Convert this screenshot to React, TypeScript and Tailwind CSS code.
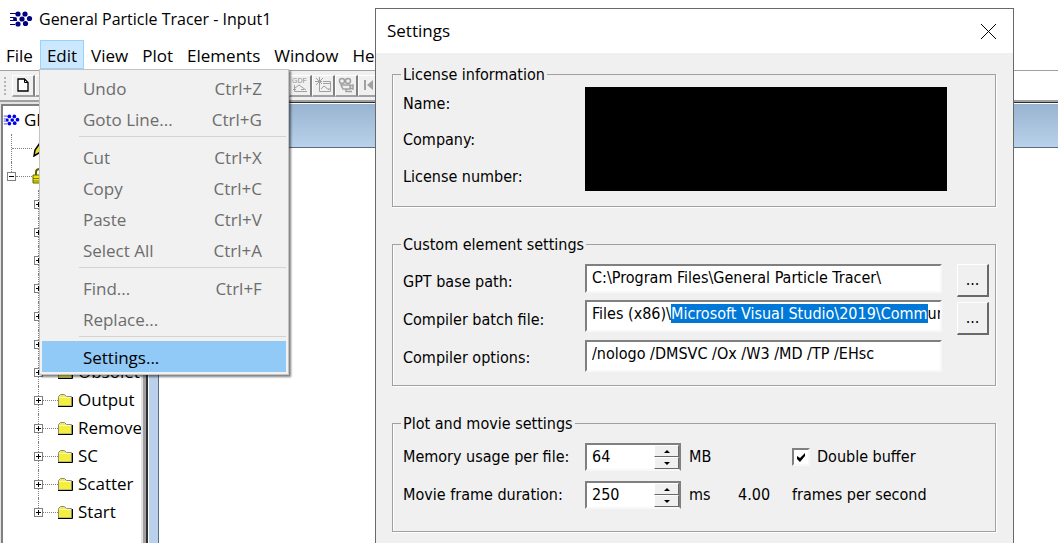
import { useEffect, useRef } from "react";

const menus = ["File", "Edit", "View", "Plot", "Elements", "Window", "Help"];

const editMenu = [
  [
    { name: "Undo", keys: "Ctrl+Z" },
    { name: "Goto Line...", keys: "Ctrl+G" },
  ],
  [
    { name: "Cut", keys: "Ctrl+X" },
    { name: "Copy", keys: "Ctrl+C" },
    { name: "Paste", keys: "Ctrl+V" },
    { name: "Select All", keys: "Ctrl+A" },
  ],
  [
    { name: "Find...", keys: "Ctrl+F" },
    { name: "Replace...", keys: "" },
  ],
  [{ name: "Settings...", keys: "" }],
];

// the first six folders are covered by the open menu
const folders = ["", "", "", "", "", "", "Obsolete", "Output", "Remove", "SC", "Scatter", "Start"];

function Logo({ className }: { className: string }) {
  return (
    <svg viewBox="0 0 24 16" className={className} fill="currentColor">
      <g stroke="currentColor" strokeWidth="1">
        <path d="M1 2.500h7M1 6.500h4M1 9.500h7M1 13.500h5" />
      </g>
      <circle cx="9" cy="3" r="2.600" />
      <circle cx="16" cy="3" r="2.600" />
      <circle cx="6" cy="8" r="2" />
      <circle cx="13" cy="8" r="2.600" />
      <circle cx="20.500" cy="7.500" r="2.600" />
      <circle cx="9" cy="13" r="2.600" />
      <circle cx="16.500" cy="12.500" r="2.600" />
    </svg>
  );
}

function Folder() {
  return (
    <svg viewBox="0 0 15 13" className="h-[13px] w-[15px] shrink-0">
      <path d="M.5 12V2.500l2-2h4l2 2h5V12z" fill="#f4ee3c" stroke="#8a8a8a" />
      <path d="M1.500 3.500h11" stroke="#fffbd0" />
      <path d="M0 12.500h14.500V3" fill="none" stroke="#000" />
    </svg>
  );
}

function Expander({ open }: { open?: boolean }) {
  return (
    <svg viewBox="0 0 9 9" className="z-10 size-[9px] shrink-0">
      <rect x=".5" y=".5" width="8" height="8" fill="#fff" stroke="#808080" />
      <path d={open ? "M2 4.500h5" : "M2 4.500h5M4.500 2v5"} stroke="#000" />
    </svg>
  );
}

function ToolButton({ label, children }: { label: string; children?: React.ReactNode }) {
  return (
    <button
      aria-label={label}
      className="flex h-[22px] w-[23px] shrink-0 items-center justify-center border-t border-r-2 border-b-2 border-l border-t-white border-r-[#808080] border-b-[#a0a0a0] border-l-white bg-[#f0f0f0]"
    >
      {children}
    </button>
  );
}

function Toolbar() {
  return (
    <div className="mt-px flex h-[30px] shrink-0 items-center border-t border-[#a0a0a0] bg-white">
      <div className="flex h-full w-2/3 items-center bg-[#f0f0f0]">
        <div className="mr-[6px] ml-1 h-[18px] w-[2px] border-l-2 border-dotted border-[#b4b4b4]" />
        <ToolButton label="New">
          <svg viewBox="0 0 12 14" className="h-[14px] w-3">
            <path d="M1 1h6.500l3.500 3.500V13H1z" fill="#fff" stroke="#000" strokeWidth="1.300" />
            <path d="M7.500 1v3.500H11" fill="none" stroke="#000" />
          </svg>
        </ToolButton>
        <ToolButton label="Open" />
        <div className="w-[231px] shrink-0" />
        <ToolButton label="GDF plot">
          <svg viewBox="0 0 16 16" className="size-4" fill="none" stroke="#a0a0a0">
            <text x="0" y="6" fontSize="7" fontFamily="Liberation Sans" fill="#909090" stroke="none">
              GDF
            </text>
            <path d="M2.500 8v6.500H15M3 11l4-3 7 5M1 12.500h3M9 12.500h3" />
          </svg>
        </ToolButton>
        <ToolButton label="New plot">
          <svg viewBox="0 0 16 16" className="size-4" fill="none" stroke="#a0a0a0">
            <path d="M0 4.500h7M4.500 0v8M1 1l6 6M8 1L1 8" />
            <path d="M4.500 8v6.500h11v-10H8M8 6.500h8M6 12l3-3 5 4v-2" />
          </svg>
        </ToolButton>
        <ToolButton label="Movie">
          <svg viewBox="0 0 16 16" className="size-4" fill="none" stroke="#a0a0a0" strokeWidth="1.500">
            <circle cx="4" cy="4" r="2.500" />
            <circle cx="10" cy="4" r="2.500" />
            <path d="M3 8h9v4H5zM12 9l3-1v4l-3-1M8 12v2.500h6" />
          </svg>
        </ToolButton>
        <ToolButton label="First frame">
          <svg viewBox="0 0 16 16" className="size-4" fill="#a0a0a0">
            <path d="M3 3h2v10H3zM12 3v10L6 8z" />
          </svg>
        </ToolButton>
      </div>
    </div>
  );
}

function EditMenu() {
  return (
    <div
      role="menu"
      className="absolute top-full -left-px z-20 w-[250px] border border-[#c4c4c4] bg-[#f1f1f1] p-[2px] shadow-[2px_2px_2px_#00000080]"
    >
      {editMenu.map((group, i) => (
        <div key={i}>
          {i > 0 && <div className="mt-[2px] mb-1 ml-[37px] h-px bg-[#d4d4d4]" />}
          {group.map((item) => (
            <button
              key={item.name}
              role="menuitem"
              className={
                item.name === "Settings..."
                  ? "flex h-[31px] w-full items-center justify-between bg-[#91c9f7] pt-[2px] pr-6 pl-[41px] text-black"
                  : "flex h-[31px] w-full items-center justify-between pt-[2px] pr-6 pl-[41px] text-[#6d6d6d]"
              }
            >
              <span>{item.name}</span>
              <span>{item.keys}</span>
            </button>
          ))}
        </div>
      ))}
    </div>
  );
}

function Tree() {
  return (
    <div className="mt-[2px] ml-px w-[142px] shrink-0 overflow-hidden border-t-2 border-r-2 border-l-2 border-t-[#808080] border-r-[#e3e3e3] border-l-[#808080] bg-white text-[17px]">
      <div className="flex h-7 items-center whitespace-nowrap">
        <Logo className="mr-1 h-[14px] w-[17px] shrink-0 text-[#0000f0]" />
        GPT
      </div>
      <div className="ml-2 border-l border-dotted border-[#808080]">
        <div className="flex h-7 items-center">
          <div className="w-5 border-t border-dotted border-[#808080]" />
          <svg viewBox="0 0 16 18" className="h-[18px] w-4">
            <path d="M2 17l1-6 7-10 4 3-7 10z" fill="#e8e020" stroke="#000" strokeWidth="1.500" />
            <path d="M9 2l4 3" stroke="#c00000" strokeWidth="3" />
          </svg>
        </div>
      </div>
      <div className="relative flex h-7 items-center pl-1">
        <div className="absolute top-0 left-2 h-[10px] border-l border-dotted border-[#808080]" />
        <Expander open />
        <div className="w-4 border-t border-dotted border-[#808080]" />
        <svg viewBox="0 0 16 16" className="size-4">
          <path d="M4 8V4q0-3 4-3t4 3v4" fill="none" stroke="#606000" strokeWidth="2" />
          <path d="M1 7h14v8H1z" fill="#f0e800" stroke="#606000" />
          <path d="M1 10.500h14M1 13h14" stroke="#808000" />
        </svg>
      </div>
      <ul>
        {folders.map((name, i) => (
          <li key={i} className="group flex h-7 items-center whitespace-nowrap">
            <div className="ml-[35px] h-full w-0 self-start border-l border-dotted border-[#808080] group-last:h-1/2" />
            <div className="-ml-[5px]">
              <Expander />
            </div>
            <div className="w-[15px] shrink-0 border-t border-dotted border-[#808080]" />
            <Folder />
            <span className="ml-[5px]">{name}</span>
          </li>
        ))}
      </ul>
    </div>
  );
}

const field =
  "border-2 border-t-[#808080] border-r-[#f8f8f8] border-b-[#f8f8f8] border-l-[#808080] bg-white pl-[5px] outline-none";

function BrowseButton({ label }: { label: string }) {
  return (
    <button
      aria-label={label}
      className="ml-[15px] h-[33px] w-8 border-t border-r-2 border-b-2 border-l border-t-white border-r-[#696969] border-b-[#696969] border-l-white bg-[#f0f0f0]"
    >
      ...
    </button>
  );
}

function Spinner({ id, value }: { id: string; value: string }) {
  const step =
    "flex h-3 w-[25px] items-center justify-center border border-t-white border-r-[#696969] border-b-[#696969] border-l-white bg-[#f0f0f0]";
  return (
    <div className="flex h-7 w-24 border-2 border-t-[#808080] border-r-[#808080] border-b-[#f8f8f8] border-l-[#808080] bg-white">
      <input id={id} defaultValue={value} className="w-0 grow pl-[5px] outline-none" />
      <div>
        <button aria-label="Increase" className={step}>
          <svg viewBox="0 0 6 3" className="h-[3px] w-[6px]">
            <path d="M3 0l3 3H0z" />
          </svg>
        </button>
        <button aria-label="Decrease" className={step}>
          <svg viewBox="0 0 6 3" className="h-[3px] w-[6px]">
            <path d="M3 3l3-3H0z" />
          </svg>
        </button>
      </div>
    </div>
  );
}

const group = "border border-[#a0a0a0] pl-[10px] shadow-[inset_1px_0_#fff,1px_1px_#fff]";
const legend = "-ml-[2px] px-[2px] pt-[2px] leading-[18px]";

function SettingsDialog() {
  const batch = useRef<HTMLInputElement>(null);

  useEffect(() => {
    const input = batch.current;
    if (!input) return;
    input.focus();
    input.setSelectionRange(12, 45);
    input.scrollLeft = 0;
  }, []);

  return (
    <div
      role="dialog"
      aria-label="Settings"
      className="absolute top-2 bottom-0 left-[375px] z-10 w-[639px] overflow-hidden border border-b-0 border-[#696969] bg-[#f0f0f0] font-['DejaVu_Sans_Condensed','DejaVu_Sans',sans-serif] text-base whitespace-nowrap"
    >
      <div className="flex h-11 items-center justify-between bg-white pr-[17px] pl-[11px] font-['Open_Sans',sans-serif] text-[17px]">
        <span>Settings</span>
        <button aria-label="Close">
          <svg viewBox="0 0 15 15" className="size-[15px]">
            <path d="M0 0l15 15M15 0L0 15" stroke="#000" />
          </svg>
        </button>
      </div>

      <form className="flex flex-col gap-[27px] pt-[11px] pr-[17px] pl-4">
        <fieldset className={group}>
          <legend className={legend}>License information</legend>
          <div className="flex pt-[3px] pb-[11px]">
            <div className="w-[182px]">
              <div className="flex h-[34px] items-center">Name:</div>
              <div className="flex h-[38px] items-center">Company:</div>
              <div className="flex h-9 items-center">License number:</div>
            </div>
            <div className="h-[104px] w-[362px] bg-black" />
          </div>
        </fieldset>

        <fieldset className={group}>
          <legend className={legend}>Custom element settings</legend>
          <div className="pt-[10px] pb-[9px]">
            <div className="flex h-9 items-start">
              <label htmlFor="base" className="w-[182px] self-center">
                GPT base path:
              </label>
              <input
                id="base"
                defaultValue="C:\Program Files\General Particle Tracer\"
                className={`${field} h-[29px] w-[357px] pb-[2px]`}
              />
              <BrowseButton label="Browse base path" />
            </div>
            <div className="flex h-10 items-start">
              <label htmlFor="batch" className="w-[182px] self-center">
                Compiler batch file:
              </label>
              <input
                id="batch"
                ref={batch}
                defaultValue="Files (x86)\Microsoft Visual Studio\2019\Community"
                className={`${field} h-8 w-[357px] pb-[5px] selection:bg-[#0078d7] selection:text-white`}
              />
              <div className="pt-[2px]">
                <BrowseButton label="Browse batch file" />
              </div>
            </div>
            <div className="flex h-9 items-start">
              <label htmlFor="options" className="w-[182px] self-center">
                Compiler options:
              </label>
              <input
                id="options"
                defaultValue="/nologo /DMSVC /Ox /W3 /MD /TP /EHsc"
                className={`${field} h-8 w-[357px] pb-[5px]`}
              />
            </div>
          </div>
        </fieldset>

        <fieldset className={group}>
          <legend className={legend}>Plot and movie settings</legend>
          <div className="pt-[5px] pb-[17px]">
            <div className="flex h-[38px] items-center">
              <label htmlFor="memory" className="w-[182px]">
                Memory usage per file:
              </label>
              <Spinner id="memory" value="64" />
              <span className="w-[111px] pl-2">MB</span>
              <label className="flex items-center gap-[7px]">
                <input
                  type="checkbox"
                  defaultChecked
                  className="peer size-[18px] appearance-none border-2 border-t-[#808080] border-r-[#f8f8f8] border-b-[#f8f8f8] border-l-[#808080] bg-white"
                />
                <svg viewBox="0 0 10 10" className="-ml-[21px] mr-1 hidden size-[10px] peer-checked:block">
                  <path d="M1 4v3l3 3 5-6V1L4 6z" />
                </svg>
                Double buffer
              </label>
            </div>
            <div className="flex h-[38px] items-center">
              <label htmlFor="duration" className="w-[182px]">
                Movie frame duration:
              </label>
              <Spinner id="duration" value="250" />
              <span className="w-[57px] pl-2">ms</span>
              <span className="w-[54px]">4.00</span>
              <span>frames per second</span>
            </div>
          </div>
        </fieldset>
      </form>
    </div>
  );
}

export default function App() {
  return (
    <div className="relative flex h-screen flex-col overflow-hidden bg-white font-['Open_Sans',sans-serif] text-black">
      <header className="flex h-10 shrink-0 items-center gap-[6px] pb-[3px] pl-[9px] text-base">
        <Logo className="h-4 w-6 text-[#000080]" />
        General Particle Tracer - Input1
      </header>

      <nav className="-ml-px flex h-[29px] shrink-0 text-[17px]">
        {menus.map((name) => (
          <div key={name} className="relative">
            <button
              className={
                name === "Edit"
                  ? "h-full border border-[#99d1ff] bg-[#cce8ff] px-[6px] pt-[2px]"
                  : "h-full px-[7px] pt-[2px]"
              }
            >
              {name}
            </button>
            {name === "Edit" && <EditMenu />}
          </div>
        ))}
      </nav>

      <Toolbar />

      <main className="flex grow border-t-2 border-[#a0a0a0] bg-[#e3e3e3]">
        <Tree />
        <div className="w-[5px] border-r-2 border-r-[#303030] bg-[#a0a0a0]" />
        <div className="flex grow flex-col border-t border-[#303030] bg-white">
          <div className="mt-px h-11 border-b border-[#5a6c80] bg-linear-to-b from-[#99b4d1] to-[#b9d1ea]" />
          <div className="ml-px w-[10px] grow border-r border-[#5a6c80] bg-[#b9d1ea]" />
        </div>
      </main>

      <SettingsDialog />
    </div>
  );
}
